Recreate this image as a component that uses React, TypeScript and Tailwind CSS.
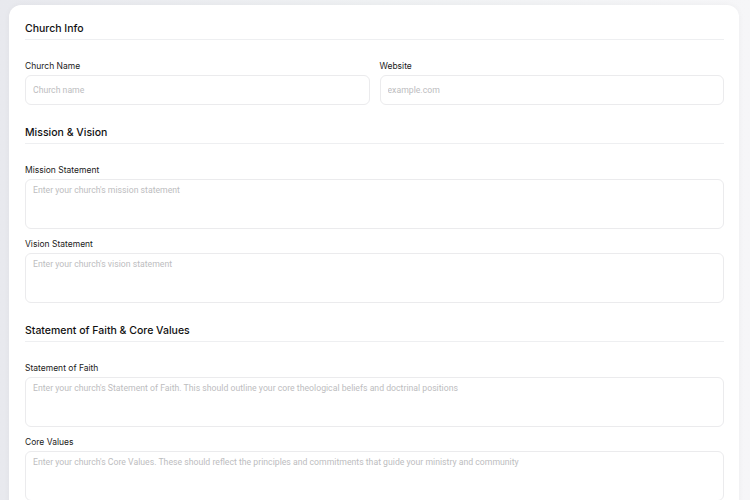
import React from 'react';

const font = { fontFamily: 'Inter, "Noto Sans", sans-serif' };
const phFont = { fontFamily: 'Roboto, "Liberation Sans", sans-serif' };

function Section({ title, children }: { title: string; children: React.ReactNode }) {
  return (
    <div className="flex flex-col">
      <h2 className="border-b border-[#eeeff1] pb-[2px] text-[10.5px] leading-[16px] font-medium text-[#111]">
        {title}
      </h2>
      <div className="flex flex-col gap-[9px] pt-[20px]">{children}</div>
    </div>
  );
}

function Field({ label, placeholder, area }: { label: string; placeholder: string; area?: boolean }) {
  return (
    <label className="flex flex-1 flex-col gap-[3px]">
      <span className="text-[8.5px] leading-[12px] text-[#1a1a1a]">{label}</span>
      {area ? (
        <textarea
          placeholder={placeholder}
          className="h-[50px] resize-none rounded-[6px] border border-[#ebebed] bg-white px-[7px] py-[4px] text-[8.7px] leading-[12px] outline-none placeholder:text-[#bdbdc0]"
          style={phFont}
        />
      ) : (
        <input
          placeholder={placeholder}
          className="h-[30px] rounded-[6px] border border-[#ebebed] bg-white px-[7px] text-[8.7px] outline-none placeholder:text-[#bdbdc0]"
          style={phFont}
        />
      )}
    </label>
  );
}

export default function App() {
  return (
    <div
      className="h-[500px] w-[750px] overflow-hidden bg-gradient-to-r from-[#e8e9ee] via-[#eff1f3] to-[#f6f6f8] pl-[9px] pr-[11px] pt-[5px]"
      style={font}
    >
      <div className="flex h-[520px] flex-col gap-[20px] rounded-[12px] bg-white pl-[16px] pr-[15px] pt-[16px] shadow-[0_0_6px_rgba(0,0,0,0.04)]">
        <Section title="Church Info">
          <div className="flex gap-[10px]">
            <Field label="Church Name" placeholder="Church name" />
            <Field label="Website" placeholder="example.com" />
          </div>
        </Section>
        <Section title="Mission & Vision">
          <Field label="Mission Statement" placeholder="Enter your church's mission statement" area />
          <Field label="Vision Statement" placeholder="Enter your church's vision statement" area />
        </Section>
        <Section title="Statement of Faith & Core Values">
          <Field
            label="Statement of Faith"
            placeholder="Enter your church's Statement of Faith. This should outline your core theological beliefs and doctrinal positions"
            area
          />
          <Field
            label="Core Values"
            placeholder="Enter your church's Core Values. These should reflect the principles and commitments that guide your ministry and community"
            area
          />
        </Section>
      </div>
    </div>
  );
}
